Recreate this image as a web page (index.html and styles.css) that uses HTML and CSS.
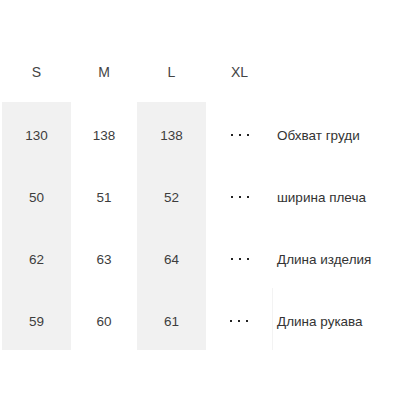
FILE: index.html
```html
<!DOCTYPE html>
<html>
<head>
<meta charset="utf-8">
<link rel="stylesheet" href="styles.css">
</head>
<body>
<div class="table">
  <div class="cell head">S</div>
  <div class="cell head">M</div>
  <div class="cell head">L</div>
  <div class="cell head">XL</div>
  <div class="cell head"></div>

  <div class="cell num gray">130</div>
  <div class="cell num">138</div>
  <div class="cell num gray">138</div>
  <div class="cell dots"><i></i><i></i><i></i></div>
  <div class="cell label">Обхват груди</div>

  <div class="cell num gray">50</div>
  <div class="cell num">51</div>
  <div class="cell num gray">52</div>
  <div class="cell dots"><i></i><i></i><i></i></div>
  <div class="cell label">ширина плеча</div>

  <div class="cell num gray">62</div>
  <div class="cell num">63</div>
  <div class="cell num gray">64</div>
  <div class="cell dots"><i></i><i></i><i></i></div>
  <div class="cell label">Длина изделия</div>

  <div class="cell num gray">59</div>
  <div class="cell num">60</div>
  <div class="cell num gray">61</div>
  <div class="cell dots last"><i></i><i></i><i></i></div>
  <div class="cell label">Длина рукава</div>
</div>
</body>
</html>
```

FILE: styles.css
```css
html, body {
  margin: 0;
  padding: 0;
  background: #ffffff;
}
body {
  font-family: "Liberation Sans", Arial, sans-serif;
  color: #3d3d3d;
}
.table {
  display: grid;
  grid-template-columns: 69px 66px 69px 67px 1fr;
  grid-template-rows: 61px repeat(4, 62px);
  padding: 41px 0 0 2px;
}
.cell {
  display: flex;
  align-items: center;
  justify-content: center;
  font-size: 13.5px;
  padding-top: 4px;
  box-sizing: border-box;
}
.head {
  padding-top: 0;
  font-size: 14px;
  color: #444;
}
.gray {
  background: #f1f1f1;
}
.dots {
  gap: 6px;
}
.dots i {
  display: block;
  width: 2px;
  height: 2px;
  background: #222;
}
.dots.last {
  border-right: 1px solid #f3f3f3;
}
.label {
  justify-content: flex-start;
  padding-left: 4px;
  white-space: nowrap;
  color: #333;
}
```
